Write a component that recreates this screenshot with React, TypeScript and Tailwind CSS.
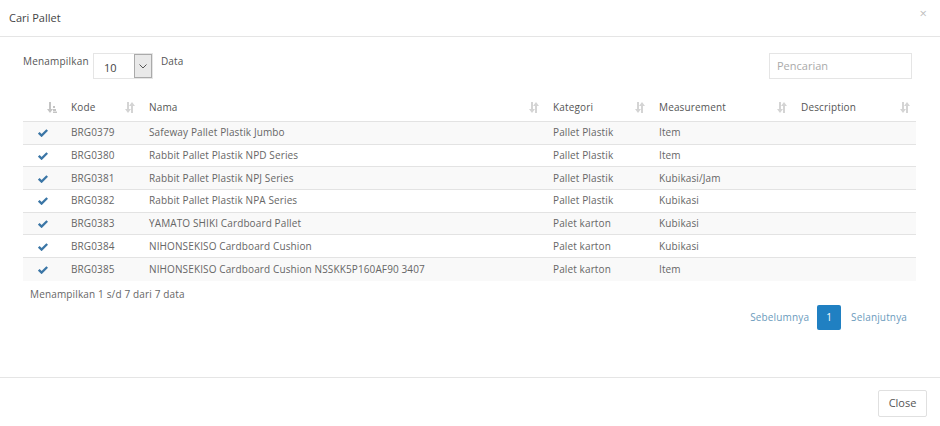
import React from "react";

const rows = [
  ["BRG0379", "Safeway Pallet Plastik Jumbo", "Pallet Plastik", "Item"],
  ["BRG0380", "Rabbit Pallet Plastik NPD Series", "Pallet Plastik", "Item"],
  ["BRG0381", "Rabbit Pallet Plastik NPJ Series", "Pallet Plastik", "Kubikasi/Jam"],
  ["BRG0382", "Rabbit Pallet Plastik NPA Series", "Pallet Plastik", "Kubikasi"],
  ["BRG0383", "YAMATO SHIKI Cardboard Pallet", "Palet karton", "Kubikasi"],
  ["BRG0384", "NIHONSEKISO Cardboard Cushion", "Palet karton", "Kubikasi"],
  ["BRG0385", "NIHONSEKISO Cardboard Cushion NSSKK5P160AF90 3407", "Palet karton", "Item"],
];

const Sort = () => (
  <svg width="10" height="11" viewBox="0 0 10 11" className="shrink-0">
    <g fill="#d4d4d4">
      <rect x="2" y="0" width="2" height="8" />
      <polygon points="0,7 6,7 3,11" />
      <rect x="6" y="3" width="2" height="8" />
      <polygon points="4,4 10,4 7,0" />
    </g>
  </svg>
);

const SortFirst = () => (
  <svg width="10" height="11" viewBox="0 0 10 11" className="shrink-0">
    <g fill="#c4c4c4">
      <rect x="2" y="0" width="2" height="8" />
      <polygon points="0,7 6,7 3,11" />
      <rect x="6" y="4" width="2" height="2" />
      <rect x="6" y="7" width="3" height="2" />
      <rect x="6" y="9.5" width="4" height="1.5" />
    </g>
  </svg>
);

const Check = () => (
  <svg width="10" height="8" viewBox="0 0 10 8">
    <path d="M0.8 3.8 L3.6 6.6 L9.2 1" stroke="#3b76a6" strokeWidth="2.3" fill="none" />
  </svg>
);

export default function App() {
  const head = ["Kode", "Nama", "Kategori", "Measurement", "Description"];
  return (
    <div
      className="w-[940px] h-[426px] bg-white text-[#666] overflow-hidden"
      style={{ fontFamily: '"Open Sans", "Liberation Sans", sans-serif' }}
    >
      {/* header */}
      <div className="h-[37px] border-b border-[#e5e5e5] flex items-start justify-between pl-[9px] pr-[13px]">
        <span className="text-[11px] text-[#444] mt-[10px]">Cari Pallet</span>
        <span className="text-[13px] text-[#c0c0c0] leading-none mt-[7px]">×</span>
      </div>

      {/* body */}
      <div className="h-[340px] pt-[16px] pl-[23px] pr-[24px]">
        <div className="flex items-start justify-between h-[26px]">
          <div className="flex items-start text-[10px] text-[#555] tracking-[0.2px]">
            <span className="mt-[1px]">Menampilkan</span>
            <div className="ml-[4px] w-[60px] h-[26px] border border-[#e5e5e5] flex tracking-normal">
              <span className="flex-1 pl-[10px] pt-[6px] text-[11px] text-[#444]">10</span>
              <div className="w-[18px] h-[24px] bg-[#e9e9e9] border border-[#aaa] flex items-center justify-center">
                <svg width="8" height="5" viewBox="0 0 8 5">
                  <path d="M0.5 0.5 L4 4 L7.5 0.5" stroke="#555" strokeWidth="1" fill="none" />
                </svg>
              </div>
            </div>
            <span className="ml-[8px] mt-[1px]">Data</span>
          </div>
          <div className="w-[143px] h-[26px] border border-[#e5e5e5] mr-[4px] flex items-center pl-[7px] text-[11px] text-[#aaa]">
            Pencarian
          </div>
        </div>

        {/* table */}
        <div className="mt-[14px] w-[893px] text-[10px]">
          <div className="grid grid-cols-[40px_78px_404px_106px_142px_123px] h-[29px] border-b border-[#e3e3e3] text-[#555] tracking-[0.15px]">
            <div className="flex items-center justify-end pr-[6px]">
              <SortFirst />
            </div>
            {head.map((h) => (
              <div key={h} className="flex items-center justify-between pl-[8px] pr-[6px]">
                <span>{h}</span>
                <Sort />
              </div>
            ))}
          </div>
          {rows.map((r, i) => (
            <div
              key={r[0]}
              className={`grid grid-cols-[40px_78px_404px_106px_142px_123px] h-[22.7px] items-center tracking-[0.12px] ${
                i % 2 === 0 ? "bg-[#f9f9f9]" : "bg-white"
              } ${i < rows.length - 1 ? "border-b border-[#e3e3e3]" : ""}`}
            >
              <div className="flex justify-center pt-[1px]">
                <Check />
              </div>
              <div className="pl-[8px]">{r[0]}</div>
              <div className="pl-[8px] whitespace-nowrap">{r[1]}</div>
              <div className="pl-[8px]">{r[2]}</div>
              <div className="pl-[8px]">{r[3]}</div>
              <div />
            </div>
          ))}
        </div>

        <div className="mt-[6px] pl-[7px] text-[10px] leading-[14px] text-[#666] tracking-[0.15px]">
          Menampilkan 1 s/d 7 dari 7 data
        </div>
        <div className="mt-[4px] flex justify-end items-center text-[10px] text-[#6b9bbd] pr-[9px] tracking-[0.15px]">
          <span>Sebelumnya</span>
          <span className="ml-[8px] w-[24px] h-[25px] bg-[#2080c2] rounded-[2px] text-white flex items-center justify-center">
            1
          </span>
          <span className="ml-[10px]">Selanjutnya</span>
        </div>
      </div>

      {/* footer */}
      <div className="border-t border-[#e5e5e5] h-[49px] flex justify-end items-start pt-[12px] pr-[13px]">
        <div className="w-[49px] h-[27px] border border-[#e0e0e0] rounded-[2px] flex items-center justify-center text-[11px] text-[#555]">
          Close
        </div>
      </div>
    </div>
  );
}
